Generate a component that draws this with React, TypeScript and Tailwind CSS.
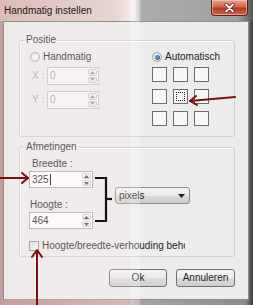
import React from "react"

// Windows 7 style "Handmatig instellen" dialog with red annotation arrows

function Spin({ disabled }: { disabled?: boolean }) {
  const fill = disabled ? "#9a9a9a" : "#444"
  return (
    <div className="flex flex-col gap-[1px] p-[1px]">
      <div className="flex w-[9px] flex-1 items-center justify-center rounded-[2px] border border-[#c9c9c9] bg-[linear-gradient(#fbfbfb,#e6e6e6)]">
        <svg width="5" height="3" viewBox="0 0 5 3">
          <path d="M0 3L2.5 0L5 3Z" fill={fill} />
        </svg>
      </div>
      <div className="flex w-[9px] flex-1 items-center justify-center rounded-[2px] border border-[#c9c9c9] bg-[linear-gradient(#fbfbfb,#e6e6e6)]">
        <svg width="5" height="3" viewBox="0 0 5 3">
          <path d="M0 0L2.5 3L5 0Z" fill={fill} />
        </svg>
      </div>
    </div>
  )
}

function NumberBox({ value, disabled, w, h, caret }: { value: string; disabled?: boolean; w: string; h: string; caret?: boolean }) {
  return (
    <div
      className={`flex ${w} ${h} border ${
        disabled ? "border-[#c3c3c3] bg-[#f6f4f4] text-[#9c9c9c]" : "border-[#a9abb2] bg-white text-[#1a1a1a]"
      }`}
    >
      <div className="flex flex-1 items-center pl-[2px]">
        {value}
        {caret && <span className="ml-[1px] h-[11px] w-[1px] bg-black" />}
      </div>
      <Spin disabled={disabled} />
    </div>
  )
}

function Radio({ checked, label }: { checked?: boolean; label: string }) {
  return (
    <div className="flex h-[12px] items-center gap-[3px] text-[#1e1e1e]">
      <div className="flex h-[10px] w-[10px] items-center justify-center rounded-full border border-[#9ea2aa] bg-[radial-gradient(#ffffff,#dcdcdc)]">
        {checked && <div className="h-[5px] w-[5px] rounded-full bg-[radial-gradient(circle_at_40%_40%,#6aa3d8,#1d4f8a)]" />}
      </div>
      <span>{label}</span>
    </div>
  )
}

function Cell({ active }: { active?: boolean }) {
  return (
    <div className="flex h-[15px] w-[15px] items-center justify-center border border-[#6d6d6d] bg-[#f7f7f7]">
      {active && <div className="h-[9px] w-[9px] border border-dotted border-[#222]" />}
    </div>
  )
}

export default function App() {
  return (
    <div className="relative h-[305px] w-[253px] overflow-hidden bg-[linear-gradient(90deg,#c99d9b_0%,#d8b8b4_50%,#a3a3a3_56%,#8d8d8d_97%,#3d3d3d_100%)] font-['Liberation_Sans',Arial,sans-serif] text-[10px] leading-[12px]">
      {/* title bar */}
      <div className="flex h-[21px] items-start justify-between bg-[linear-gradient(90deg,#dcbcb7_0%,#e8d6d3_46%,#f4eeee_53%,#acacac_56%,#a0a0a0_94%,#555_100%)]">
        <div className="pl-[4px] pt-[5px] text-[10px] text-[#202020]">Handmatig instellen</div>
        <div className="mr-[5px] flex h-[16px] w-[37px] items-center justify-center rounded-b-[4px] border border-t-0 border-[#5a2318] bg-[linear-gradient(#e9a595,#d1634c_45%,#b9371f_55%,#cf6a4d)] shadow-[inset_0_0_0_1px_rgba(255,220,210,0.5)]">
          <svg width="11" height="10" viewBox="0 0 11 10">
            <path d="M2 1.5L9 8.5M9 1.5L2 8.5" stroke="#5a1a10" strokeWidth="3.2" strokeLinecap="round" />
            <path d="M2 1.5L9 8.5M9 1.5L2 8.5" stroke="#fff" strokeWidth="1.8" strokeLinecap="round" />
          </svg>
        </div>
      </div>

      {/* client area */}
      <div className="ml-[3px] mr-[4px] flex h-[279px] flex-col border border-[#8f8f8f] bg-[#ececec] pl-[15px] pr-[13px] pt-[11px]">
        <fieldset className="h-[104px] rounded-[3px] border border-[#cfcfcf] shadow-[inset_1px_1px_0_#fff]">
          <legend className="ml-[5px] px-[1px] leading-[14px] text-[#1e1e1e]">Positie</legend>
          <div className="mt-[4px] flex pl-[10px]">
            <div className="flex w-[122px] flex-col">
              <Radio label="Handmatig" />
              <div className="mt-[4px] flex items-center">
                <span className="w-[17px] pl-[2px] text-[#a5a5a5]">X :</span>
                <NumberBox value="0" disabled w="w-[52px]" h="h-[18px]" />
              </div>
              <div className="mt-[6px] flex items-center">
                <span className="w-[17px] pl-[2px] text-[#a5a5a5]">Y :</span>
                <NumberBox value="0" disabled w="w-[52px]" h="h-[18px]" />
              </div>
            </div>
            <div className="flex flex-col">
              <Radio checked label="Automatisch" />
              <div className="mt-[4px] grid grid-cols-[15px_15px_15px] gap-x-[6px] gap-y-[7px]">
                <Cell />
                <Cell />
                <Cell />
                <Cell />
                <Cell active />
                <Cell />
                <Cell />
                <Cell />
                <Cell />
              </div>
            </div>
          </div>
        </fieldset>

        <fieldset className="mt-[3px] h-[117px] rounded-[3px] border border-[#cfcfcf] shadow-[inset_1px_1px_0_#fff]">
          <legend className="ml-[5px] px-[1px] leading-[14px] text-[#1e1e1e]">Afmetingen</legend>
          <div className="flex pl-[9px]">
            <div className="flex flex-col text-[#1e1e1e]">
              <div className="mt-[4px] pl-[3px]">Breedte :</div>
              <div className="mt-[1px]">
                <NumberBox value="325" caret w="w-[64px]" h="h-[17px]" />
              </div>
              <div className="mt-[11px] pl-[1px]">Hoogte :</div>
              <div className="mt-[1px]">
                <NumberBox value="464" w="w-[64px]" h="h-[17px]" />
              </div>
            </div>
            <div className="ml-[22px] mt-[33px] flex h-[17px] w-[75px] items-center justify-between rounded-[3px] border border-[#8c8c8c] bg-[linear-gradient(#f4f4f4,#e9e9e9_50%,#dadada_51%,#cfcfcf)] pl-[3px] pr-[4px] text-[#1e1e1e]">
              <span>pixels</span>
              <svg width="7" height="4" viewBox="0 0 7 4">
                <path d="M0 0H7L3.5 4Z" fill="#222" />
              </svg>
            </div>
          </div>
          <div className="mt-[11px] flex items-center pl-[9px] text-[#1e1e1e]">
            <div className="h-[10px] w-[10px] border border-[#8e8f8f] bg-[linear-gradient(135deg,#dcdcdc,#fafafa)]" />
            <span className="ml-[3px] w-[143px] overflow-hidden whitespace-nowrap">Hoogte/breedte-verhouding behouden</span>
          </div>
        </fieldset>

        <div className="mt-[12px] flex justify-end gap-[9px] text-[#1e1e1e]">
          <div className="flex h-[18px] w-[58px] items-center justify-center rounded-[3px] border border-[#707070] bg-[linear-gradient(#f4f4f4,#ebebeb_50%,#dddddd_51%,#cfcfcf)]">Ok</div>
          <div className="flex h-[18px] w-[59px] items-center justify-center rounded-[3px] border border-[#707070] bg-[linear-gradient(#f4f4f4,#ebebeb_50%,#dddddd_51%,#cfcfcf)]">Annuleren</div>
        </div>
      </div>

      {/* glass reflection band */}
      <div className="pointer-events-none absolute left-[130px] top-0 h-full w-[10px] bg-white/25" />
      <div className="pointer-events-none absolute left-[4px] top-[22px] h-[278px] w-[126px] bg-[#ffeaea]/25" />

      {/* annotations */}
      <svg className="pointer-events-none absolute left-0 top-0" width="253" height="305" viewBox="0 0 253 305">
        <g stroke="#7a1010" strokeWidth="2" fill="none" strokeLinecap="round" strokeLinejoin="round">
          <path d="M235 97L190 101" />
          <path d="M196 96L190 101L197 105" />
          <path d="M0 178H28" />
          <path d="M22 173L28 178L22 183" />
          <path d="M37 305V251" />
          <path d="M32 257L37 250L42 257" />
        </g>
        <g stroke="#111" strokeWidth="2.2" fill="none">
          <path d="M95 178H106V221H95" />
          <path d="M106 199H112" />
        </g>
      </svg>
    </div>
  )
}
